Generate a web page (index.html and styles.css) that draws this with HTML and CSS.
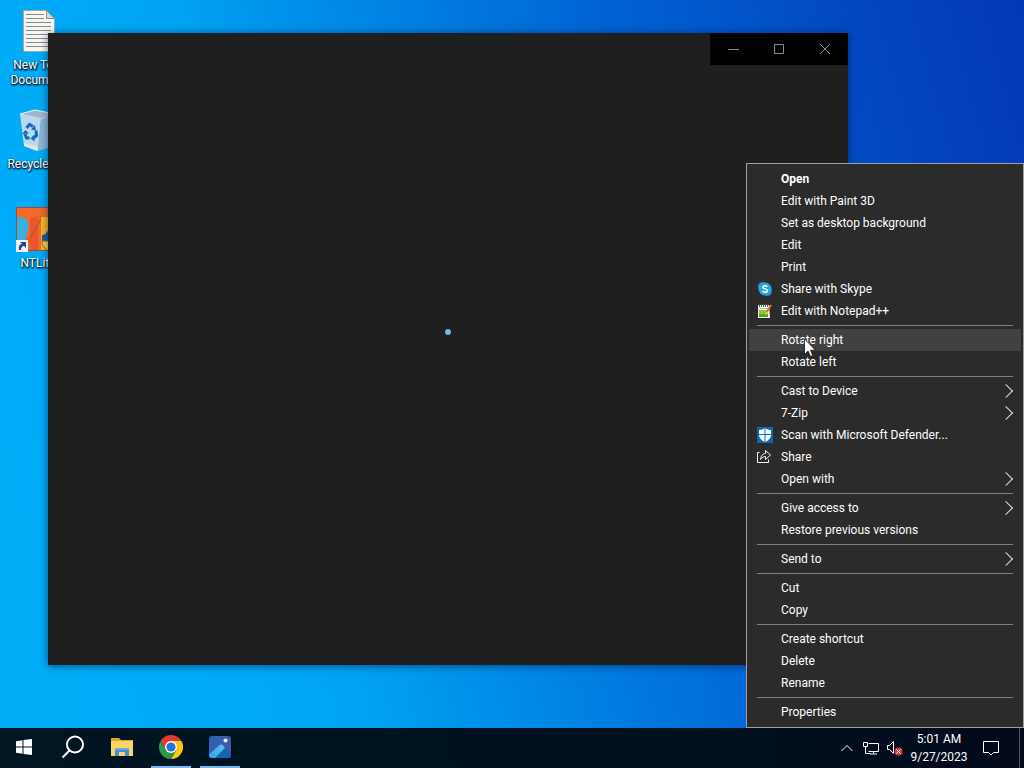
FILE: index.html
```html
<!DOCTYPE html>
<html lang="en">
<head>
    <meta charset="UTF-8">
    <meta name="viewport" content="width=device-width, initial-scale=1.0">
    <title>Desktop</title>
    <link rel="stylesheet" href="styles.css">
</head>
<body>
    <main class="desktop">
        <div class="shortcuts">
            <a href="#" class="shortcut">
                <svg class="shortcut-icon" viewBox="0 0 48 48">
                    <path d="M9.500 2.500h23l8 8v33h-31z" fill="#f7f7f5" stroke="#a9a59c"/>
                    <path d="M32.500 2.500v8h8z" fill="#d5d5d2" stroke="#8d8d88"/>
                    <path d="M12 6.500h18M12 10.500h18M12 14.500h25M12 18.500h25M12 22.500h25M12 26.500h25M12 30.500h25M12 34.500h25M12 38.500h25" stroke="#8b8b88"/>
                </svg>
                <span>New Text Document</span>
            </a>
            <a href="#" class="shortcut">
                <svg class="shortcut-icon" viewBox="0 0 48 48">
                    <path d="M6 7l15-4 20 4-14 5z" fill="#9fb9cb" stroke="#e6f1f8"/>
                    <path d="M6 7l21 5-3 32-14-5z" fill="#b9d9ee"/>
                    <path d="M27 12l14-5-4 33-13 4z" fill="#8fb6d2"/>
                    <path d="M10 36l14 4-1 4-13-5z" fill="#e4e4e8"/>
                    <path d="M12.500 21l3-3.500 3.500 2M22 23.500l.5 5-3 2.500M15.500 31h-3l-1.500-4" fill="none" stroke="#1767c0" stroke-width="3"/>
                    <path d="M17 22.500l5 1-1-5.500zM20.500 27.500v7l-4-3zM8 27l3.500-4 3.500 3.500z" fill="#1767c0"/>
                </svg>
                <span>Recycle Bin</span>
            </a>
            <a href="#" class="shortcut">
                <svg class="shortcut-icon" viewBox="0 0 48 48">
                    <path d="M2.500 1.500h43v43h-43z" fill="#f26b2c" stroke="#99502f"/>
                    <path d="M3 11c8-1 13 4 11 13l-3 10H3z" fill="#35b2e4"/>
                    <path d="M16 12l8-2v34h-8z" fill="#e9572a"/>
                    <path d="M12 34C20 28 24 18 28 9M14 37c4-9 8-15 13-23" stroke="#ad5a32" fill="none"/>
                    <path d="M27 11h18v33H27z" fill="#f9b91f"/>
                    <path d="M28 29c3 0 5-3 7-6h10v12H28z" fill="#1d5aa6"/>
                    <path d="M28 35h14v4l-7 6c-4-2-7-5-7-10z" fill="#ffd53b" stroke="#8a6a25"/>
                    <path d="M2 34h12v12H2z" fill="#f5f5f5"/>
                    <path d="M5 44c-1-4 1-6 3-6l-2-2h6v6l-2-2c-2 0-3 2-3 4z" fill="#27469a"/>
                </svg>
                <span>NTLite</span>
            </a>
        </div>

        <section class="window" aria-label="Photos">
            <div class="window-controls">
                <button type="button" aria-label="Minimize"><svg viewBox="0 0 11 11"><path d="M0 5.500h11"/></svg></button>
                <button type="button" aria-label="Maximize"><svg viewBox="0 0 11 11"><path d="M.5.5h9v9H.5z"/></svg></button>
                <button type="button" aria-label="Close"><svg viewBox="0 0 11 11"><path d="M0 0l10 10M10 0L0 10"/></svg></button>
            </div>
            <div class="window-body"><span class="loading-dot"></span></div>
        </section>

        <div class="context-menu" role="menu">
            <button type="button" class="default">Open</button>
            <button type="button">Edit with Paint 3D</button>
            <button type="button">Set as desktop background</button>
            <button type="button">Edit</button>
            <button type="button">Print</button>
            <button type="button" class="with-icon">
                <svg class="menu-icon" viewBox="0 0 16 16">
                    <circle cx="5.500" cy="5.500" r="4.500" fill="#1593d6"/>
                    <circle cx="10.500" cy="10.500" r="4.500" fill="#2a7fc5"/>
                    <circle cx="8" cy="8" r="6.500" fill="#2ba6df"/>
                    <path d="M10.300 5.700C9 4.400 5.900 4.500 5.900 6.200c0 2.200 4.500 1.100 4.500 3.500 0 2-3.500 2-4.900.4" fill="none" stroke="#fff" stroke-width="1.500"/>
                </svg>
                Share with Skype
            </button>
            <button type="button" class="with-icon">
                <svg class="menu-icon" viewBox="0 0 16 16">
                    <path d="M1 2h11l1 13H1z" fill="#f2f4e8"/>
                    <path d="M2 7h9v7H2z" fill="#8ccb2d"/>
                    <path d="M2 11h9v3H2z" fill="#57a51d"/>
                    <path d="M2.500 1v3M4.500 1v3M6.500 1v3M8.500 1v3M10.500 1v3" stroke="#555"/>
                    <path d="M3 5.500h8" stroke="#b8bcae"/>
                    <path d="M14 2l-5 8" stroke="#d9782d" stroke-width="2"/>
                    <path d="M9.500 8.500L8 12l3-2z" fill="#f3dca4"/>
                </svg>
                Edit with Notepad++
            </button>
            <hr>
            <button type="button" class="active">Rotate right</button>
            <button type="button">Rotate left</button>
            <hr>
            <button type="button" class="submenu">Cast to Device</button>
            <button type="button" class="submenu">7-Zip</button>
            <button type="button" class="with-icon">
                <svg class="menu-icon" viewBox="0 0 16 16">
                    <path d="M0 0h16v16H0z" fill="#0c67b5"/>
                    <path d="M8 1c2 1.500 4 2 6 2v5c0 3-2.500 5.500-6 7-3.500-1.500-6-4-6-7V3c2 0 4-.5 6-2z" fill="#fff"/>
                    <path d="M8 1v14M2 7.500h12" stroke="#0c67b5"/>
                </svg>
                Scan with Microsoft Defender...
            </button>
            <button type="button" class="with-icon">
                <svg class="menu-icon" viewBox="0 0 16 16" fill="none" stroke="#f4f4f4">
                    <path d="M2.500 3.500h-2v10h11v-3"/>
                    <path d="M3.500 10.500c.5-4 2.500-6 5-6v-3l5 4.500-5 4.500V7.500c-2 0-3.500 1-5 3z"/>
                </svg>
                Share
            </button>
            <button type="button" class="submenu">Open with</button>
            <hr>
            <button type="button" class="submenu">Give access to</button>
            <button type="button">Restore previous versions</button>
            <hr>
            <button type="button" class="submenu">Send to</button>
            <hr>
            <button type="button">Cut</button>
            <button type="button">Copy</button>
            <hr>
            <button type="button">Create shortcut</button>
            <button type="button">Delete</button>
            <button type="button">Rename</button>
            <hr>
            <button type="button">Properties</button>
        </div>

        <svg class="pointer" viewBox="0 0 12 19">
            <path d="M.5.8v15.700l3.600-3.500 2.400 5.500 2.300-1-2.300-5.300h5z" fill="#fff" stroke="#111" stroke-width=".8"/>
        </svg>
    </main>

    <footer class="taskbar">
        <nav class="apps">
            <button type="button" aria-label="Start">
                <svg viewBox="0 0 24 24" fill="#fff"><path d="M4 6.200l6.500-.9v6.200H4zM11.500 5.100L20 4v7.500h-8.500zM4 12.500h6.500v6.200L4 17.800zM11.500 12.500H20V20l-8.500-1.100z"/></svg>
            </button>
            <button type="button" aria-label="Search">
                <svg viewBox="0 0 24 24" fill="none" stroke="#fff" stroke-width="2"><circle cx="14" cy="9.500" r="8"/><path d="M8.500 15.500L1.500 22.500"/></svg>
            </button>
            <button type="button" aria-label="File Explorer">
                <svg viewBox="0 0 24 24">
                    <path d="M1 3h8l2 2h12v4H1z" fill="#e3a42d"/>
                    <path d="M1 6h22v15H1z" fill="#fcd566"/>
                    <path d="M5 21v-8h14v8h-4v-4H9v4z" fill="#3f92d2"/>
                    <path d="M5 13h14v2H5z" fill="#69aee0"/>
                </svg>
            </button>
            <button type="button" class="running" aria-label="Chrome">
                <svg viewBox="0 0 24 24">
                    <path d="M1.600 6A12 12 0 0 1 22.400 6H12L6.800 15z" fill="#e2392f"/>
                    <path d="M12 6h10.400A12 12 0 0 1 12 24l5.200-9z" fill="#fbc816"/>
                    <path d="M1.600 6l5.200 9L12 18l5.200-3L12 24A12 12 0 0 1 1.600 6z" fill="#289b49"/>
                    <circle cx="12" cy="12" r="6" fill="#fff"/>
                    <circle cx="12" cy="12" r="4.600" fill="#2c70d8"/>
                </svg>
            </button>
            <button type="button" class="running" aria-label="Photos">
                <svg viewBox="0 0 24 24">
                    <defs>
                        <linearGradient id="sky" x2="1" y2="1"><stop stop-color="#2765b5"/><stop offset="1" stop-color="#5350a3"/></linearGradient>
                        <linearGradient id="hill" x1="1" x2="0" y2="1"><stop stop-color="#62c6f2"/><stop offset="1" stop-color="#2aa2e8"/></linearGradient>
                    </defs>
                    <rect x="1" y="1" width="22" height="22" rx="3" fill="url(#sky)"/>
                    <path d="M12 11c1-1 2-1 3 0l8 8v1a3 3 0 0 1-3 3H7z" fill="#1a63ad"/>
                    <path d="M1 19.500L11 10.500c1.500-1.200 3-1.200 4.200.2l1.800 2L7 23H4a3 3 0 0 1-3-3z" fill="url(#hill)"/>
                    <circle cx="17.500" cy="5.500" r="2" fill="#eef6ff"/>
                </svg>
            </button>
        </nav>
        <div class="tray">
            <button type="button" aria-label="Show hidden icons"><svg viewBox="0 0 16 16"><path d="M2.500 11L8 5.500l5.500 5.500"/></svg></button>
            <button type="button" aria-label="Network"><svg viewBox="0 0 16 16"><path d="M5.500 3.500h10v8h-10M.5 2.500h4v4h-4zM2.500 6.500v7h5M10.500 11.500v2M7 14h7"/></svg></button>
            <button type="button" aria-label="Volume muted">
                <svg viewBox="0 0 16 16"><path d="M.5 5.500h2l4-4v12l-4-4h-2z"/><circle cx="11.500" cy="11.500" r="4" fill="#d63b42" stroke="none"/><path d="M9.500 9.500l4 4M13.500 9.500l-4 4"/></svg>
            </button>
            <button type="button" class="clock"><time>5:01 AM</time><time>9/27/2023</time></button>
            <button type="button" class="notifications" aria-label="Notifications"><svg viewBox="0 0 18 18"><path d="M1.500 2.500h15v11h-5L9 16l-2.500-2.500h-5z"/></svg></button>
            <button type="button" class="show-desktop" aria-label="Show desktop"></button>
        </div>
    </footer>
</body>
</html>
```
FILE: styles.css
```css
* {
    box-sizing: border-box;
}

body {
    margin: 0;
    height: 100vh;
    display: flex;
    flex-direction: column;
    overflow: hidden;
    font-family: Roboto, "Open Sans", sans-serif;
    font-size: 12px;
    line-height: 16px;
    color: #fff;
}

button {
    margin: 0;
    padding: 0;
    border: 0;
    background: none;
    color: inherit;
    font: inherit;
}

svg {
    display: block;
}

.desktop {
    position: relative;
    flex: 1;
    min-height: 0;
    background: linear-gradient(75deg, #00aff8 0%, #00aaf7 20%, #00a3f2 30%, #0080e2 49%, #0063d4 65%, #0347c0 86%, #0338b5 100%);
}

/* desktop icons */
.shortcuts {
    display: flex;
    flex-direction: column;
    gap: 19px;
    width: 76px;
    padding-top: 8px;
}

.shortcut {
    display: flex;
    flex-direction: column;
    align-items: center;
    height: 80px;
    color: #fff;
    line-height: 15px;
    text-align: center;
    text-decoration: none;
    text-shadow: 1px 1px 2px #000, 0 1px 2px #000;
}

.shortcut-icon {
    flex-shrink: 0;
    width: 48px;
    height: 48px;
    margin-bottom: 2px;
}

/* app window */
.window {
    position: absolute;
    inset: 33px 176px 63px 48px;
    display: flex;
    flex-direction: column;
    background: #1f1f1f;
    box-shadow: 0 1px 8px rgba(0, 20, 60, 0.6);
}

.window-controls {
    align-self: flex-end;
    display: flex;
    background: #000;
}

.window-controls button {
    display: grid;
    place-items: center;
    width: 46px;
    height: 32px;
}

.window-controls svg {
    width: 11px;
    height: 11px;
    fill: none;
    stroke: #8c8c8c;
}

.window-body {
    flex: 1;
    display: grid;
    place-items: center;
    padding-bottom: 66px;
}

.loading-dot {
    width: 6px;
    height: 6px;
    border-radius: 50%;
    background: #7fb4d8;
}

/* context menu */
.context-menu {
    position: absolute;
    right: 0;
    bottom: 0;
    display: flex;
    flex-direction: column;
    width: 278px;
    padding: 4px 2px;
    border: 1px solid #a0a0a0;
    background: #2b2b2b;
}

.context-menu button {
    display: flex;
    align-items: center;
    height: 22px;
    padding: 0 8px 0 32px;
    text-align: left;
}

.context-menu .default {
    font-weight: 700;
}

.context-menu .with-icon {
    gap: 8px;
    padding-left: 8px;
}

.context-menu .active {
    background: #414141;
}

.context-menu hr {
    width: auto;
    height: 1px;
    margin: 3px 8px;
    border: 0;
    background: #808080;
}

.menu-icon {
    width: 16px;
    height: 16px;
}

.submenu::after {
    content: "";
    width: 9px;
    height: 9px;
    margin-left: auto;
    margin-right: 2px;
    border: solid #e0e0e0;
    border-width: 1px 1px 0 0;
    transform: rotate(45deg);
}

.pointer {
    position: absolute;
    left: 804px;
    top: 338px;
    width: 12px;
    height: 19px;
}

/* taskbar */
.taskbar {
    display: flex;
    justify-content: space-between;
    height: 40px;
    background: linear-gradient(90deg, #001622, #00111f 60%, #020a1c);
}

.apps,
.tray {
    display: flex;
}

.apps {
    gap: 1px;
}

.apps button {
    display: grid;
    place-items: center;
    width: 48px;
    border-bottom: 2px solid transparent;
}

.apps svg {
    width: 24px;
    height: 24px;
}

.apps .running {
    width: 40px;
    margin: 0 4px;
    border-bottom-color: #76b9ed;
}

.tray svg {
    width: 16px;
    height: 16px;
    fill: none;
    stroke: #fff;
}

.tray button {
    display: grid;
    place-items: center;
    width: 24px;
}

.tray .clock {
    width: 64px;
    padding: 2px 0;
}

.tray .notifications {
    width: 40px;
}

.tray .notifications svg {
    width: 18px;
    height: 18px;
}

.tray .show-desktop {
    width: 5px;
    margin-left: 8px;
    border-left: 1px solid #4d5564;
}
```
